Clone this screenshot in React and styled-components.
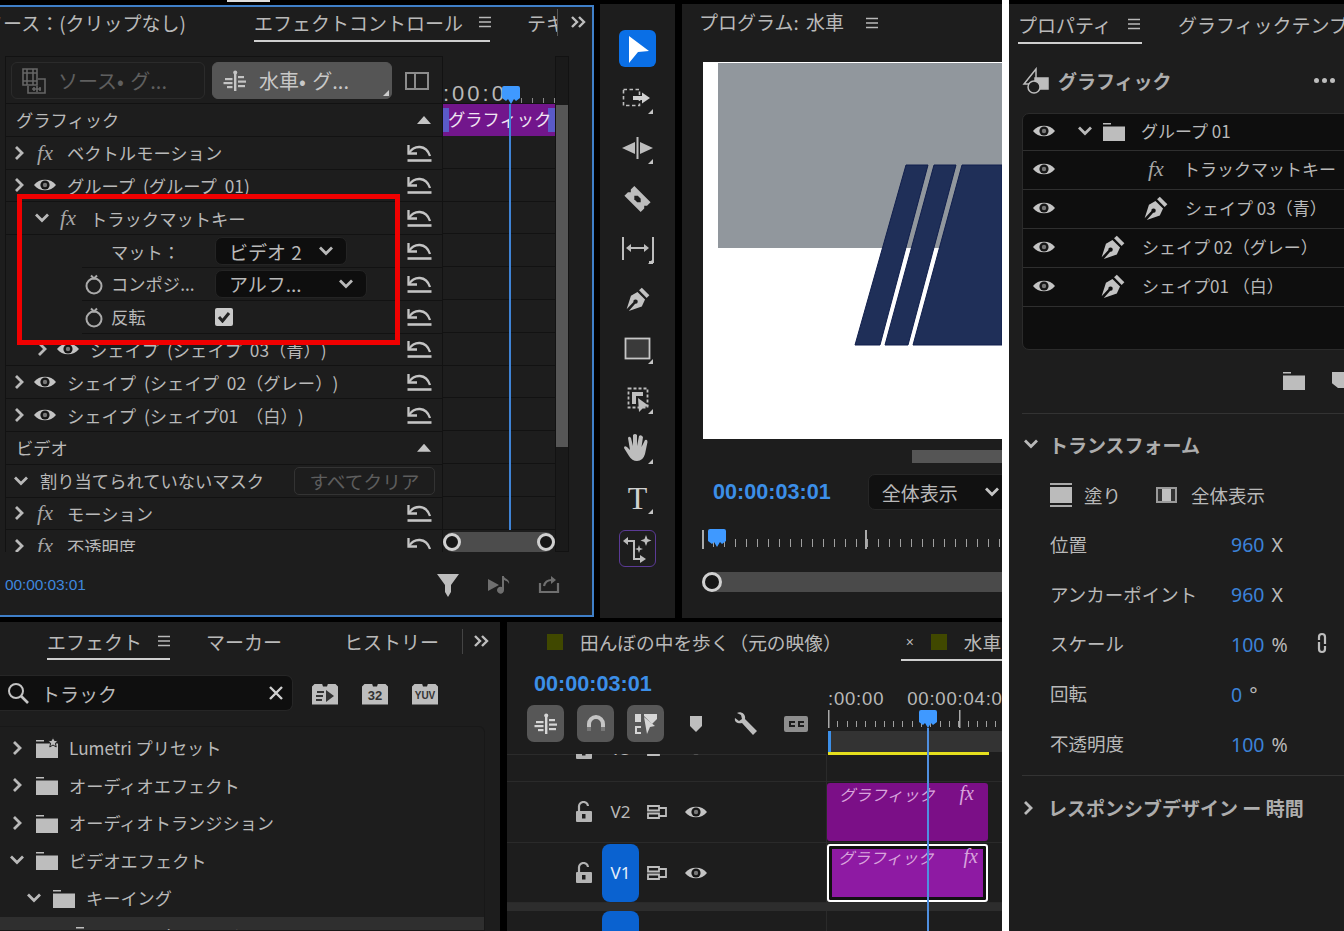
import React from 'react';
import styled, { createGlobalStyle } from 'styled-components';

const ink = '#b9b9b9';
const panel = '#1d1d1d';
const line = '#121212';
const blue = '#3c8fe8';
const jp = '"Noto Sans CJK JP", "Noto Sans", sans-serif';

const GlobalStyle = createGlobalStyle`
  html, body { margin: 0; padding: 0; background: #000; }
  body { font-family: ${jp}; color: ${ink}; text-spacing-trim: space-all; }
  * { box-sizing: border-box; }
`;

const Page = styled.div`
  width: 1344px;
  height: 931px;
  overflow: hidden;
  display: grid;
  grid-template-columns: 1002px 7px 335px;
  background: #000;
`;

const LeftArea = styled.div`
  display: flex;
  flex-direction: column;
  min-width: 0;
`;

const TopSliver = styled.div`
  height: 4px;
  flex: none;
  padding-left: 227px;
  &::before {
    content: '';
    display: block;
    width: 43px;
    height: 2px;
    background: #ddd;
  }
`;

const TopRow = styled.div`
  display: flex;
  height: 614px;
  flex: none;
`;

const BottomRow = styled.div`
  display: flex;
  margin-top: 4px;
  height: 309px;
  flex: none;
`;

const WhiteStrip = styled.div`
  background: #fff;
`;

/* ---------- icons ---------- */

const Glyph = styled.svg`
  display: block;
  flex: none;
`;

const ChevronR = () => (
  <Glyph width="12" height="16" viewBox="0 0 12 16" fill="none" stroke="#b9b9b9" strokeWidth="2.8">
    <path d="M3 2 L9 8 L3 14" />
  </Glyph>
);

const ChevronD = ({ color = '#b9b9b9' }) => (
  <Glyph width="16" height="12" viewBox="0 0 16 12" fill="none" stroke={color} strokeWidth="2.8">
    <path d="M2 2.5 L8 8.5 L14 2.5" />
  </Glyph>
);

const Eye = () => (
  <Glyph width="24" height="16" viewBox="0 0 24 16">
    <path d="M1 8 C6 1 18 1 23 8 C18 15 6 15 1 8Z" fill="#c4c4c4" />
    <circle cx="12" cy="8" r="4.6" fill="#161616" />
    <circle cx="12" cy="8" r="2.2" fill="#777" />
  </Glyph>
);

const Reset = () => (
  <Glyph width="26" height="20" viewBox="0 0 26 20" fill="none" stroke="#c4c4c4" strokeWidth="2.3">
    <path d="M2.5 2 V10.5 H11" />
    <path d="M3 10 C8 2 20 1 24 13" />
    <path d="M1.5 17.5 H25.5" strokeWidth="2.6" />
  </Glyph>
);

const Burger = () => (
  <Glyph width="14" height="12" viewBox="0 0 14 12" stroke="#b9b9b9" strokeWidth="1.4">
    <path d="M1 1.5 H13 M1 6 H13 M1 10.5 H13" />
  </Glyph>
);

const Overflow = () => (
  <Glyph width="16" height="14" viewBox="0 0 16 14" fill="none" stroke="#bdbdbd" strokeWidth="2.4">
    <path d="M2 2 L7 7 L2 12 M9 2 L14 7 L9 12" />
  </Glyph>
);

const Folder = ({ star }) => (
  <Glyph width="24" height="22" viewBox="0 0 24 22" fill="#bdbdbd">
    <path d="M1 3 H9 V4.5 H1Z M1 6.5 H23 V21 H1Z" />
    {star && <path d="M18 0 L19.5 3.4 L23 3.8 L20.4 6.2 L21.2 10 L18 8 L14.8 10 L15.6 6.2 L13 3.8 L16.5 3.4Z" stroke={panel} strokeWidth="1" />}
  </Glyph>
);

const Pen = ({ size = 26 }) => (
  <Glyph width={size} height={size} viewBox="0 0 24 24" fill="#c2c2c2">
    <path d="M15.5 1.5 L22.5 8.5 L20 11 L13 4Z" />
    <path fillRule="evenodd" d="M11.5 5.5 L18.5 12.5 L15.5 19 L3.5 23 L9.4 16.4 A2 2 0 1 0 7.8 14.8 L1.5 21.5 L5.5 9Z" />
  </Glyph>
);

const Stopwatch = () => (
  <Glyph width="20" height="22" viewBox="0 0 20 22" fill="none" stroke="#ababab" strokeWidth="2">
    <circle cx="10" cy="13" r="7.5" />
    <path d="M7 2.5 L10 5.5 L13 2.5" />
  </Glyph>
);

const Sequence = ({ color = '#c4c4c4' }) => (
  <Glyph width="24" height="24" viewBox="0 0 24 24" fill={color}>
    <rect x="11" y="2" width="2.4" height="20" />
    <circle cx="12.2" cy="3.5" r="2" />
    <rect x="2" y="9" width="7.5" height="2.2" />
    <rect x="0.5" y="13" width="9" height="2.2" />
    <rect x="4" y="17" width="5.5" height="2.2" />
    <rect x="15" y="7" width="6" height="2.2" />
    <rect x="15" y="11.5" width="8" height="2.2" />
    <rect x="15" y="16" width="7" height="2.2" />
  </Glyph>
);

const TrackTarget = () => (
  <Glyph width="20" height="16" viewBox="0 0 20 16" fill="none" stroke="#bdbdbd" strokeWidth="1.8">
    <path d="M1 2 H12 V6.5 H1Z M1 9.5 H12 V14 H1Z M12 4 H19 V12 H12" />
  </Glyph>
);

const Lock = () => (
  <Glyph width="18" height="22" viewBox="0 0 18 22">
    <path d="M4 10 V6 A4.5 4.5 0 0 1 13 5" fill="none" stroke="#b4b4b4" strokeWidth="2.2" />
    <rect x="1" y="10" width="16" height="11" rx="1" fill="#b4b4b4" />
    <rect x="7" y="13" width="3.5" height="4.5" fill="#1d1d1d" />
  </Glyph>
);

const PlayHead = () => (
  <Glyph width="18" height="19" viewBox="0 0 18 19" fill="#3f99ff">
    <path d="M2 0 H16 Q18 0 18 2 V12 L14 15 L12 13 L9 18 L6 13 L4 15 L0 12 V2 Q0 0 2 0Z" />
  </Glyph>
);

/* tool bar drawings */
const ToolSvg = ({ children }) => (
  <Glyph width="37" height="37" viewBox="0 0 37 37" fill="#bdbdbd">
    {children}
  </Glyph>
);

const tools = [
  <Glyph key="a" width="37" height="37" viewBox="0 0 37 37" fill="#fff"><polygon points="10,6 30,21 19,22 10,33" /></Glyph>,
  <ToolSvg key="b">
    <rect x="4.5" y="9.5" width="16" height="16" fill="none" stroke="#bdbdbd" strokeWidth="1.6" strokeDasharray="3.5 2.5" />
    <polygon points="14,16 23,16 23,12.5 31,18 23,23.5 23,20 14,20" fill="#d0d0d0" />
  </ToolSvg>,
  <ToolSvg key="c">
    <rect x="17.5" y="7" width="2" height="22" />
    <polygon points="16,12 16,24 3,18" />
    <polygon points="21,12 21,24 34,18" />
  </ToolSvg>,
  <ToolSvg key="d">
    <g transform="rotate(45 18.5 19)">
      <path d="M7 12 H30 V17 L28 19 L30 21 V26 H7 V21 L9 19 L7 17Z" />
      <path d="M14 19 L16.5 16.5 L20.5 16.5 L23 19 L20.5 21.5 L16.5 21.5Z" fill="#1d1d1d" />
    </g>
  </ToolSvg>,
  <ToolSvg key="e">
    <rect x="3" y="7" width="2" height="23" />
    <path d="M33 7 H35 V33 H30 V31 H33Z" />
    <path d="M7 18 L12 14 V17 H25 V14 L30 18 L25 22 V19 H12 V22Z" />
  </ToolSvg>,
  <ToolSvg key="f">
    <g transform="translate(6 6)"><Pen size={26} /></g>
  </ToolSvg>,
  <ToolSvg key="g">
    <rect x="6.5" y="8.5" width="24" height="20" fill="#3a3a3a" stroke="#c6c6c6" strokeWidth="1.8" />
  </ToolSvg>,
  <ToolSvg key="h">
    <rect x="9.5" y="8.5" width="19" height="19" fill="none" stroke="#bdbdbd" strokeWidth="1.8" strokeDasharray="3 2" />
    <path d="M13 12 H24 V16 H17 V24 H13Z" />
    <polygon points="19,18 30,26 25,27 20,32" />
  </ToolSvg>,
  <ToolSvg key="i">
    <path d="M10 26 L5 18 Q5 15 8 17 L11 20 L9 8 Q10 5.5 12 8 L14 16 L14 5 Q16 3 18 5 L18 16 L20 6 Q22 4 24 7 L22.5 17 L26 10 Q28.5 9 28.5 12 L26 24 Q24 31 18 31 Q13 31 10 26Z" />
  </ToolSvg>,
  null,
  <ToolSvg key="k">
    <path d="M4 11 L9 7 V10 H16 V28 H21 V25 L27 29 L21 33 V30 H14 V12 H9 V15Z" />
    <path d="M27 5 L28.5 9 L32.5 10.5 L28.5 12 L27 16 L25.5 12 L21.5 10.5 L25.5 9Z" />
    <path d="M20 15 L21 18 L24 19 L21 20 L20 23 L19 20 L16 19 L19 18Z" />
  </ToolSvg>,
];

/* ---------- shared tabs ---------- */

const TabBar = styled.div`
  display: flex;
  align-items: center;
  height: ${p => p.$h || 38}px;
  flex: none;
  font-size: 19px;
  white-space: nowrap;
  overflow: hidden;
`;

const Tab = styled.div`
  display: flex;
  align-items: center;
  gap: 15px;
  height: 100%;
  flex: none;
  margin-left: ${p => p.$ml || 0}px;
  padding-bottom: ${p => p.$pb || 0}px;
  ${p => p.$w ? `width: ${p.$w}px;` : ''}
  ${p => p.$active ? 'box-shadow: inset 0 -2px 0 #cfcfcf;' : ''}
`;

const CutTab = styled.div`
  width: ${p => p.$w}px;
  flex: none;
  overflow: hidden;
  display: flex;
  margin-left: ${p => p.$ml || 0}px;
  margin-bottom: ${p => p.$mb || 0}px;
  justify-content: ${p => p.$end ? 'flex-end' : 'flex-start'};
  ${p => p.$divider ? 'border-right: 1px solid #555;' : ''}
`;

const TabDivider = styled.div`
  width: 1px;
  height: 25px;
  flex: none;
  margin-left: 23px;
  background: #444;
`;

const OverflowSlot = styled.div`
  margin-left: ${p => p.$ml}px;
  margin-bottom: ${p => p.$mb || 0}px;
  flex: none;
`;

/* ---------- effect controls ---------- */

const EcPanel = styled.section`
  width: 594px;
  flex: none;
  margin: 1px 0;
  background: ${panel};
  border: 2px solid #3f7fc8;
  border-left: none;
  display: flex;
  flex-direction: column;
  position: relative;
`;

const EcBody = styled.div`
  margin: 14px 0 0 5px;
  height: 496px;
  width: 564px;
  display: grid;
  grid-template-columns: 438px 112px 14px;
  flex: none;
`;

const EcLeft = styled.div`
  display: flex;
  flex-direction: column;
  overflow: hidden;
  border-right: 1px solid ${line};
  box-shadow: inset 1px 1px 0 ${line};
`;

const SourceBar = styled.div`
  height: 48px;
  flex: none;
  display: flex;
  align-items: center;
  padding: 2px 0 0 6px;
  border-bottom: 1px solid ${line};
`;

const SourceTab = styled.div`
  height: 37px;
  width: ${p => p.$w}px;
  flex: none;
  margin-right: 7px;
  border-radius: 6px;
  display: flex;
  align-items: center;
  gap: 12px;
  padding-left: 10px;
  font-size: 20px;
  word-spacing: 2px;
  white-space: nowrap;
  position: relative;
  color: ${p => p.$active ? '#c8c8c8' : '#5f5f5f'};
  background: ${p => p.$active ? '#555' : 'transparent'};
  border: 1px solid ${p => p.$active ? '#555' : '#2b2b2b'};
`;

const CornerMark = styled.span`
  position: absolute;
  right: 2px;
  bottom: 2px;
  width: 6px;
  height: 6px;
  background: #ccc;
  clip-path: polygon(100% 0, 100% 100%, 0 100%);
`;

const SplitIcon = styled.div`
  width: 24px;
  height: 18px;
  margin-left: 6px;
  flex: none;
  border: 2px solid #8c8c8c;
  &::before {
    content: '';
    display: block;
    width: 7px;
    height: 100%;
    border-right: 2px solid #8c8c8c;
  }
`;

const Rows = styled.div`
  display: flex;
  flex-direction: column;
`;

const Row = styled.div`
  height: 32.8px;
  flex: none;
  display: flex;
  align-items: center;
  justify-content: space-between;
  padding: 0 10px 0 ${p => p.$indent || 8}px;
  margin-left: ${p => p.$inset || 0}px;
  border-bottom: 1px solid ${line};
  font-size: 17.3px;
  word-spacing: 4px;
  white-space: nowrap;
`;

const RowMain = styled.div`
  display: flex;
  align-items: center;
  min-width: 0;
`;

const ChevronSlot = styled.div`
  width: 12px;
  flex: none;
  margin-right: 8px;
  display: flex;
  justify-content: center;
`;

const IconSlot = styled.div`
  width: 24px;
  margin-right: 10px;
  flex: none;
  display: flex;
  justify-content: center;
`;

const Fx = styled.span`
  font-family: "Liberation Serif", serif;
  font-style: italic;
  font-size: ${p => p.$size || 22}px;
  line-height: 1;
  color: ${p => p.$color || '#a6a6a6'};
`;

const GroupTitle = styled.span`
  padding-left: 11px;
`;

const UpTriangle = styled.span`
  width: 14px;
  height: 8px;
  margin-right: 1px;
  background: #c4c4c4;
  clip-path: polygon(50% 0, 100% 100%, 0 100%);
`;

const ParamLabel = styled.span`
  width: 104px;
  flex: none;
`;

const Select = styled.div`
  width: ${p => p.$w}px;
  height: 28px;
  flex: none;
  background: #0e0e0e;
  border: 1px solid #242424;
  border-radius: 7px;
  display: flex;
  align-items: center;
  justify-content: space-between;
  padding: 0 12px 0 13px;
  font-size: 19px;
  word-spacing: 1px;
`;

const StopSlot = styled.div`
  width: 20px;
  flex: none;
  margin-right: 7px;
`;

const Check = styled.div`
  width: 18px;
  height: 18px;
  flex: none;
  border-radius: 2px;
  background: #c9c9c9;
  display: flex;
  align-items: center;
  justify-content: center;
`;

const ClearBtn = styled.div`
  width: 141px;
  height: 28px;
  flex: none;
  margin-right: -3px;
  border: 1px solid #333;
  border-radius: 5px;
  display: flex;
  align-items: center;
  justify-content: center;
  font-size: 18.7px;
  color: #5e5e5e;
`;

const Lanes = styled.div`
  position: relative;
  overflow: hidden;
  display: flex;
  flex-direction: column;
`;

const LaneHead = styled.div`
  height: 48px;
  flex: none;
  display: flex;
  flex-direction: column;
  justify-content: flex-end;
  overflow: hidden;
  border-bottom: 1px solid ${line};
  background: repeating-linear-gradient(90deg, #8a8a8a 0 1px, transparent 1px 11px) 78px 100% / 100% 5px no-repeat;
`;

const LaneTime = styled.div`
  font-family: "Liberation Sans", sans-serif;
  font-size: 22px;
  line-height: 24px;
  letter-spacing: 3px;
  margin-bottom: -3px;
  white-space: nowrap;
`;

const LaneClip = styled.div`
  height: 32px;
  flex: none;
  background:
    linear-gradient(90deg, #5a5ac8 0 6px, transparent 6px calc(100% - 7px), #5a5ac8 calc(100% - 7px)) 0 4px / 100% 24px no-repeat,
    #72168c;
  padding-left: 5px;
  color: #f0e6f2;
  font-size: 17.3px;
  line-height: 30px;
  white-space: nowrap;
`;

const LaneRow = styled.div`
  height: 32.8px;
  flex: none;
  border-bottom: 1px solid ${line};
`;

const Zoomer = styled.div`
  position: absolute;
  left: 0;
  right: 0;
  bottom: 0;
  height: 20px;
  background: #4c4c4c;
  border-radius: 10px;
  display: flex;
  justify-content: space-between;
  align-items: center;
`;

const Knob = styled.span`
  width: ${p => p.$size || 18}px;
  height: ${p => p.$size || 18}px;
  flex: none;
  border-radius: 50%;
  background: #161616;
  border: 3px solid #d0d0d0;
`;

const EcLine = styled.div`
  position: absolute;
  left: 66px;
  top: 48px;
  bottom: 22px;
  width: 1.5px;
  background: #3f83d6;
`;

const EcHead = styled.div`
  position: absolute;
  left: 59px;
  top: 30px;
`;

const VScroll = styled.div`
  background: #1a1a1a;
  border: 1px solid ${line};
  padding-top: 48px;
  height: 100%;
  &::before {
    content: '';
    display: block;
    height: 342px;
    background: #565656;
  }
`;

const EcFoot = styled.div`
  flex: 1;
  display: flex;
  align-items: center;
  padding: 2px 32px 0 5px;
`;

const TimeSmall = styled.div`
  font-family: "Liberation Sans", sans-serif;
  font-size: 15.5px;
  color: #3f86dc;
  margin-right: auto;
  letter-spacing: -0.1px;
`;

const FootIcons = styled.div`
  display: flex;
  align-items: center;
  gap: 27px;
`;

const RedBox = styled.div`
  position: absolute;
  left: 17px;
  top: 187px;
  width: 383px;
  height: 151px;
  border: 5px solid #f00000;
  pointer-events: none;
`;

const EffectControls = () => {
  const reset = <Reset />;
  const chevR = <ChevronSlot><ChevronR /></ChevronSlot>;
  const fx = <IconSlot><Fx>fx</Fx></IconSlot>;
  const eye = <IconSlot><Eye /></IconSlot>;
  return (
    <EcPanel>
      <TabBar $h={35}>
        <CutTab $w={186} $end $mb={5}><span>ソース：(クリップなし)</span></CutTab>
        <Tab $ml={68} $pb={5} $active $w={236}>エフェクトコントロール<Burger /></Tab>
        <CutTab $w={31} $ml={37} $mb={5} $divider><span>テキスト</span></CutTab>
        <OverflowSlot $ml={12} $mb={5}><Overflow /></OverflowSlot>
      </TabBar>
      <EcBody>
        <EcLeft>
          <SourceBar>
            <SourceTab $w={194}>
              <Glyph width="24" height="26" viewBox="0 0 24 26" fill="none" stroke="#666" strokeWidth="1.6">
                <path d="M1 1 H15 V17 H1Z M1 5 H15 M1 13 H15 M5 1 V17 M11 1 V17" />
                <path d="M6 18 V25 H23 V11 H16 M10 21 H19 M12 19 V23 M15 18 V24 M18 19 V23" />
              </Glyph>
              ソース• グ...
            </SourceTab>
            <SourceTab $w={180} $active>
              <Sequence />
              水車• グ...
              <CornerMark />
            </SourceTab>
            <SplitIcon />
          </SourceBar>
          <Rows>
            <Row $indent={11}><span>グラフィック</span><UpTriangle /></Row>
            <Row><RowMain>{chevR}{fx}ベクトルモーション</RowMain>{reset}</Row>
            <Row><RowMain>{chevR}{eye}グループ (グループ 01)</RowMain>{reset}</Row>
            <Row $indent={31}><RowMain><ChevronSlot><ChevronD /></ChevronSlot><IconSlot><Fx>fx</Fx></IconSlot>トラックマットキー</RowMain>{reset}</Row>
            <Row $indent={2} $inset={77}><RowMain><StopSlot /><ParamLabel>マット：</ParamLabel><Select $w={132}>ビデオ 2<ChevronD /></Select></RowMain>{reset}</Row>
            <Row $indent={2} $inset={77}><RowMain><StopSlot><Stopwatch /></StopSlot><ParamLabel>コンポジ...</ParamLabel><Select $w={152}>アルフ...<ChevronD /></Select></RowMain>{reset}</Row>
            <Row $indent={2} $inset={77}><RowMain><StopSlot><Stopwatch /></StopSlot><ParamLabel>反転</ParamLabel><Check><Glyph width="14" height="12" viewBox="0 0 14 12" fill="none" stroke="#222" strokeWidth="3"><path d="M2 6 L5.5 10 L12 2" /></Glyph></Check></RowMain>{reset}</Row>
            <Row $indent={31}><RowMain>{chevR}{eye}シェイプ (シェイプ 03（青）)</RowMain>{reset}</Row>
            <Row><RowMain>{chevR}{eye}シェイプ (シェイプ 02（グレー）)</RowMain>{reset}</Row>
            <Row><RowMain>{chevR}{eye}シェイプ (シェイプ01 （白）)</RowMain>{reset}</Row>
            <Row $indent={11}><span>ビデオ</span><UpTriangle /></Row>
            <Row><RowMain><ChevronD /><GroupTitle>割り当てられていないマスク</GroupTitle></RowMain><ClearBtn>すべてクリア</ClearBtn></Row>
            <Row><RowMain>{chevR}{fx}モーション</RowMain>{reset}</Row>
            <Row><RowMain>{chevR}{fx}不透明度</RowMain>{reset}</Row>
          </Rows>
        </EcLeft>
        <Lanes>
          <LaneHead>
            <LaneTime>:00:0</LaneTime>
          </LaneHead>
          <LaneClip>グラフィック</LaneClip>
          {Array.from({ length: 12 }, (_, i) => <LaneRow key={i} />)}
          <EcLine />
          <EcHead><PlayHead /></EcHead>
          <Zoomer><Knob /><Knob /></Zoomer>
        </Lanes>
        <VScroll />
      </EcBody>
      <EcFoot>
        <TimeSmall>00:00:03:01</TimeSmall>
        <FootIcons>
          <Glyph width="24" height="24" viewBox="0 0 24 24" fill="#bdbdbd"><path d="M1 1 H23 L15 12 V19 L12 24 L9 19 V12Z" /></Glyph>
          <Glyph width="24" height="20" viewBox="0 0 24 20" fill="#6f6f6f"><path d="M1 4 L12 10 L1 16Z M15 1 H17 V2 C19 4 23 5 22 9 C21 6 19 6 17 5 V15 A3.5 3.5 0 1 1 15 12Z" /></Glyph>
          <Glyph width="22" height="20" viewBox="0 0 22 20" fill="none" stroke="#6f6f6f" strokeWidth="2.2"><path d="M2 8 V17 H20 V8 M6 11 C7 6 10 5 14 5" /><path d="M13 1 L18 5 L13 9Z" fill="#6f6f6f" stroke="none" /></Glyph>
        </FootIcons>
      </EcFoot>
      <RedBox />
    </EcPanel>
  );
};

/* ---------- tool bar ---------- */

const ToolBarWrap = styled.nav`
  width: 75px;
  margin-left: 6px;
  flex: none;
  background: ${panel};
  display: flex;
  flex-direction: column;
  align-items: center;
  gap: 13px;
  padding: 26px 0 0;
`;

const ToolBtn = styled.div`
  width: 37px;
  height: 37px;
  flex: none;
  position: relative;
  border-radius: 6px;
  display: flex;
  align-items: center;
  justify-content: center;
  background: ${p => p.$active ? '#0a6fe6' : 'transparent'};
  border: ${p => p.$ai ? '1.5px solid #5b3a96' : 'none'};
  ${p => p.$corner ? `
    &::after {
      content: '';
      position: absolute;
      right: 3px;
      bottom: 3px;
      width: 5px;
      height: 5px;
      background: #c4c4c4;
      clip-path: polygon(100% 0, 100% 100%, 0 100%);
    }` : ''}
`;

const TypeT = styled.span`
  font-family: "Liberation Serif", serif;
  font-size: 32px;
  line-height: 37px;
  color: #cfcfcf;
`;

const ToolBar = () => (
  <ToolBarWrap>
    {tools.map((t, i) => (
      <ToolBtn key={i} $active={i === 0} $ai={i === 10} $corner={i > 0 && i < 10 && i !== 3 && i !== 5}>
        {t || <TypeT>T</TypeT>}
      </ToolBtn>
    ))}
  </ToolBarWrap>
);

/* ---------- program monitor ---------- */

const Program = styled.section`
  width: 320px;
  margin-left: 7px;
  flex: none;
  background: ${panel};
  display: flex;
  flex-direction: column;
  overflow: hidden;
`;

const ProgramTitle = styled.div`
  height: 58px;
  flex: none;
  display: flex;
  gap: 21px;
  padding: 3px 0 0 17px;
  font-size: 19px;
  word-spacing: 3px;
  line-height: 29px;
  white-space: nowrap;
`;

const BurgerAt = styled.div`
  padding-top: 10px;
`;

const Frame = styled.svg`
  display: block;
  flex: none;
  margin-left: 21px;
`;

const MiniScroll = styled.div`
  height: 13px;
  flex: none;
  margin: 11px 0 0 230px;
  background: #555;
`;

const TimeRow = styled.div`
  display: flex;
  align-items: center;
  margin-top: 11px;
  padding-left: 31px;
  height: 36px;
  flex: none;
`;

const TimeBig = styled.div`
  font-family: "Liberation Sans", sans-serif;
  font-weight: 700;
  font-size: 21.6px;
  color: ${blue};
  white-space: nowrap;
`;

const ScaleSelect = styled.div`
  width: 140px;
  height: 36px;
  flex: none;
  margin-left: 37px;
  background: #111;
  border: 1px solid #262626;
  border-radius: 7px;
  display: flex;
  align-items: center;
  justify-content: space-between;
  padding: 0 7px 0 13px;
  font-size: 19px;
`;

const MonRuler = styled.div`
  position: relative;
  height: 19px;
  flex: none;
  margin: 20px 0 0 20px;
  background:
    linear-gradient(#aaa, #aaa) 0 0 / 2px 100% no-repeat,
    linear-gradient(#aaa, #aaa) 163px 0 / 2px 100% no-repeat,
    repeating-linear-gradient(90deg, #a0a0a0 0 1px, transparent 1px 11px) 0 9px / 100% 8px no-repeat;
`;

const MonHead = styled.div`
  position: absolute;
  left: 6px;
  top: -1px;
`;

const MonSlider = styled.div`
  height: 20px;
  flex: none;
  margin: 23px 0 0 20px;
  background: #4a4a4a;
  border-radius: 10px 0 0 10px;
  display: flex;
  align-items: center;
`;

const ProgramMonitor = () => (
  <Program>
    <ProgramTitle>プログラム: 水車<BurgerAt><Burger /></BurgerAt></ProgramTitle>
    <Frame width="299" height="377" viewBox="0 0 299 377">
      <rect width="299" height="377" fill="#fff" />
      <rect x="15" y="1" width="284" height="185" fill="#91979d" />
      <g fill="#1f2f58" stroke="#111f4c" strokeWidth="1">
        <polygon points="203,103 225,103 177,283 152,283" />
        <polygon points="231,103 253,103 205,283 182,283" />
        <polygon points="259,103 299,103 299,283 210,283" />
      </g>
    </Frame>
    <MiniScroll />
    <TimeRow>
      <TimeBig>00:00:03:01</TimeBig>
      <ScaleSelect>全体表示<ChevronD color="#c4c4c4" /></ScaleSelect>
    </TimeRow>
    <MonRuler><MonHead><PlayHead /></MonHead></MonRuler>
    <MonSlider><Knob $size={20} /></MonSlider>
  </Program>
);

/* ---------- effects panel ---------- */

const EffectsWrap = styled.section`
  width: 500px;
  flex: none;
  background: ${panel};
  display: flex;
  flex-direction: column;
  overflow: hidden;
`;

const SearchRow = styled.div`
  display: flex;
  align-items: center;
  height: 36px;
  margin-top: 15px;
  flex: none;
`;

const SearchBox = styled.div`
  width: 293px;
  height: 36px;
  flex: none;
  background: #0f0f0f;
  border: 1px solid #262626;
  border-left: none;
  border-radius: 0 7px 7px 0;
  display: flex;
  align-items: center;
  padding: 0 9px 0 6px;
  gap: 11px;
  font-size: 19px;
`;

const SearchText = styled.span`
  flex: 1;
`;

const Badges = styled.div`
  display: flex;
  gap: 24px;
  margin: 2px 0 0 19px;
`;

const Badge = styled.div`
  width: 26px;
  height: 21px;
  flex: none;
  background: #bdbdbd;
  color: #333;
  font-family: "Liberation Sans", sans-serif;
  font-weight: 700;
  font-size: ${p => p.$small ? 10 : 13}px;
  display: flex;
  align-items: center;
  justify-content: center;
  padding-top: 3px;
  clip-path: polygon(0 3px, 3px 0, 10px 0, 11px 3px, 15px 3px, 16px 0, 23px 0, 26px 3px, 26px 100%, 0 100%);
`;

const TreeBox = styled.div`
  width: 485px;
  margin-top: 15px;
  flex: 1;
  border: 1px solid #181818;
  border-left: none;
  border-radius: 0 6px 0 0;
  padding-top: 2px;
  overflow: hidden;
`;

const TreeRow = styled.div`
  height: 37.5px;
  display: flex;
  align-items: center;
  padding-left: ${p => p.$indent || 10}px;
  font-size: 17.2px;
  white-space: nowrap;
  background: ${p => p.$selected ? '#2f2f2f' : 'transparent'};
`;

const TreeChevron = styled.div`
  width: 14px;
  flex: none;
  margin-right: 11px;
  display: flex;
  justify-content: center;
`;

const TreeLabel = styled.span`
  padding-left: 10px;
`;

const Effects = () => (
  <EffectsWrap>
    <TabBar $h={38}>
      <Tab $ml={47} $active $w={123}>エフェクト<Burger /></Tab>
      <Tab $ml={36}>マーカー</Tab>
      <Tab $ml={62}>ヒストリー</Tab>
      <TabDivider />
      <OverflowSlot $ml={10}><Overflow /></OverflowSlot>
    </TabBar>
    <SearchRow>
      <SearchBox>
        <Glyph width="24" height="24" viewBox="0 0 24 24" fill="none" stroke="#c4c4c4" strokeWidth="2">
          <circle cx="10" cy="10" r="7" />
          <path d="M15 15 L22 22" strokeWidth="2.6" />
        </Glyph>
        <SearchText>トラック</SearchText>
        <Glyph width="14" height="14" viewBox="0 0 14 14" stroke="#d0d0d0" strokeWidth="2.4">
          <path d="M1 1 L13 13 M13 1 L1 13" />
        </Glyph>
      </SearchBox>
      <Badges>
        <Badge>
          <Glyph width="18" height="14" viewBox="0 0 18 14" fill="#333"><path d="M1 2 H8 V4 H1Z M0 6 H7 V8 H0Z M0 10 H6 V12 H0Z M10 1 L18 7 L10 13Z" /></Glyph>
        </Badge>
        <Badge>32</Badge>
        <Badge $small>YUV</Badge>
      </Badges>
    </SearchRow>
    <TreeBox>
      <TreeRow><TreeChevron><ChevronR /></TreeChevron><Folder star /><TreeLabel>Lumetri プリセット</TreeLabel></TreeRow>
      <TreeRow><TreeChevron><ChevronR /></TreeChevron><Folder /><TreeLabel>オーディオエフェクト</TreeLabel></TreeRow>
      <TreeRow><TreeChevron><ChevronR /></TreeChevron><Folder /><TreeLabel>オーディオトランジション</TreeLabel></TreeRow>
      <TreeRow><TreeChevron><ChevronD /></TreeChevron><Folder /><TreeLabel>ビデオエフェクト</TreeLabel></TreeRow>
      <TreeRow $indent={27}><TreeChevron><ChevronD /></TreeChevron><Folder /><TreeLabel>キーイング</TreeLabel></TreeRow>
      <TreeRow $indent={75} $selected><Folder /><TreeLabel>トラックマットキー</TreeLabel></TreeRow>
    </TreeBox>
  </EffectsWrap>
);

/* ---------- timeline ---------- */

const TimelineWrap = styled.section`
  width: 495px;
  flex: none;
  margin-left: 7px;
  background: ${panel};
  display: flex;
  flex-direction: column;
  position: relative;
  overflow: hidden;
`;

const Swatch = styled.span`
  width: 16px;
  height: 16px;
  flex: none;
  background: #404800;
`;

const SeqTab = styled.div`
  display: flex;
  align-items: center;
  gap: 17px;
  height: 100%;
  flex: none;
  font-size: 18.7px;
  margin-left: ${p => p.$ml}px;
  ${p => p.$active ? 'padding: 0 4px 0 5px; box-shadow: inset 0 -2px 0 #cfcfcf;' : ''}
`;

const TabClose = styled.span`
  font-family: "Liberation Sans", sans-serif;
  font-size: 14px;
`;

const SeqHead = styled.div`
  display: grid;
  grid-template-columns: 320px 1fr;
  height: 93px;
  flex: none;
`;

const SeqTools = styled.div`
  padding: 10px 0 0 20px;
  display: flex;
  flex-direction: column;
  border-bottom: 1px solid #2b2b2b;
`;

const SeqTime = styled(TimeBig)`
  padding-left: 7px;
  line-height: 26px;
`;

const ToolRow = styled.div`
  display: flex;
  align-items: center;
  margin-top: 8px;
`;

const SeqBtn = styled.div`
  width: 37px;
  height: 37px;
  flex: none;
  margin-right: 13px;
  background: #575757;
  border-radius: 7px;
  display: flex;
  align-items: center;
  justify-content: center;
`;

const PlainIcon = styled.div`
  width: 37px;
  flex: none;
  margin-right: 13px;
  display: flex;
  justify-content: center;
`;

const SeqRuler = styled.div`
  display: flex;
  flex-direction: column;
  padding-top: 26px;
  position: relative;
`;

const RulerLabels = styled.div`
  display: flex;
  height: 23px;
  font-family: "Liberation Sans", sans-serif;
  font-size: 18.5px;
  line-height: 23px;
  letter-spacing: 0.8px;
  white-space: nowrap;
  color: #b9b9b9;
  padding-left: 1px;
`;

const RulerGap = styled.span`
  width: 23px;
  flex: none;
`;

const SeqTicks = styled.div`
  height: 18px;
  flex: none;
  margin-left: 1px;
  background:
    linear-gradient(#aaa, #aaa) 0 0 / 1.5px 100% no-repeat,
    linear-gradient(#aaa, #aaa) 131px 0 / 1.5px 100% no-repeat,
    repeating-linear-gradient(90deg, #a0a0a0 0 1px, transparent 1px 9.3px) 0 11px / 100% 6px no-repeat;
`;

const WorkBand = styled.div`
  height: 21px;
  flex: none;
  margin: 3px 0 0 1px;
  background: #333;
  border-left: 3px solid ${blue};
`;

const YellowBar = styled.div`
  height: 3px;
  flex: none;
  width: 161px;
  margin-left: 1px;
  background: #e6e01e;
`;

const Track = styled.div`
  display: grid;
  grid-template-columns: 320px 1fr;
  height: ${p => p.$h}px;
  flex: none;
  overflow: hidden;
  border-bottom: ${p => p.$plain ? 'none' : '1px solid #2a2a2a'};
`;

const TrackHead = styled.div`
  display: flex;
  align-items: ${p => p.$top ? 'flex-start' : 'center'};
  padding-left: 68px;
  border-right: 1px solid #2a2a2a;
`;

const HeadIcons = styled.div`
  display: flex;
  align-items: center;
  height: 30px;
  margin-top: -20px;
`;

const LockGap = styled.div`
  width: 18px;
  flex: none;
`;

const TrackLabel = styled.div`
  width: 37px;
  flex: none;
  margin-left: 9px;
  text-align: center;
  font-family: "Noto Sans", sans-serif;
  font-size: 17px;
  line-height: 58px;
  height: 58px;
  border-radius: 8px;
  background: ${p => p.$on ? '#0a62d0' : 'transparent'};
  color: ${p => p.$on ? '#e6eefa' : ink};
`;

const TargetSlot = styled.div`
  margin-left: 8px;
`;

const EyeSlot = styled.div`
  margin-left: 17px;
`;

const Clip = styled.div`
  width: 161px;
  height: 58px;
  margin: 1px 0 0 0;
  display: flex;
  justify-content: space-between;
  align-items: flex-start;
  padding: ${p => p.$selected ? '0 8px 0 9px' : '0 14px 0 12px'};
  font-size: 16px;
  line-height: 22px;
  font-style: italic;
  color: #d8a4dc;
  white-space: nowrap;
  border-radius: 3px;
  background: ${p => p.$selected ? '#8e1aa3' : '#7b0f87'};
  ${p => p.$selected ? 'border: 2.5px solid #fff; box-shadow: inset 0 0 0 3px #111;' : ''}
`;

const Band = styled.div`
  height: 8px;
  flex: none;
  background: #2d2d2d;
`;

const PlayLine = styled.div`
  position: absolute;
  left: 420px;
  top: 106px;
  bottom: 0;
  width: 1.5px;
  background: #4f8fe0;
`;

const SeqPlayHead = styled.div`
  position: absolute;
  left: 412px;
  top: 88px;
`;

const TrackRow = ({ label, on, h, selected }) => (
  <Track $h={h}>
    <TrackHead>
      <Lock />
      <TrackLabel $on={on}>{label}</TrackLabel>
      <TargetSlot><TrackTarget /></TargetSlot>
      <EyeSlot><Eye /></EyeSlot>
    </TrackHead>
    <Clip $selected={selected}>
      <span>グラフィック</span>
      <Fx $size={20} $color="#d8a4dc">fx</Fx>
    </Clip>
  </Track>
);

const Timeline = () => (
  <TimelineWrap>
    <TabBar $h={39}>
      <SeqTab $ml={40}><Swatch />田んぼの中を歩く（元の映像）</SeqTab>
      <SeqTab $ml={59} $active><TabClose>×</TabClose><Swatch />水車</SeqTab>
    </TabBar>
    <SeqHead>
      <SeqTools>
        <SeqTime>00:00:03:01</SeqTime>
        <ToolRow>
          <SeqBtn><Sequence color="#d6d6d6" /></SeqBtn>
          <SeqBtn>
            <Glyph width="20" height="20" viewBox="0 0 20 20" fill="none">
              <path d="M3 17 V10 A7 7 0 0 1 17 10 V17" stroke="#c4c4c4" strokeWidth="4" />
              <path d="M1 15 H5 M15 15 H19" stroke="#777" strokeWidth="4" />
            </Glyph>
          </SeqBtn>
          <SeqBtn>
            <Glyph width="26" height="26" viewBox="0 0 26 26" fill="#d6d6d6">
              <path d="M2 3 H8 V11 H2Z M2 15 H8 V17 H4 V21 H8 V23 H2Z" />
              <path d="M11 3 H24 V8 L19 13 L11 5Z" />
              <path d="M11 6 L22 15 L17 16 L14 23Z" />
            </Glyph>
          </SeqBtn>
          <PlainIcon>
            <Glyph width="14" height="18" viewBox="0 0 14 18" fill="#bdbdbd"><path d="M1 1 H13 V11 L7 17 L1 11Z" /></Glyph>
          </PlainIcon>
          <PlainIcon>
            <Glyph width="24" height="24" viewBox="0 0 24 24" fill="#bdbdbd">
              <path d="M1 6 L5 9 L8 7 L7 3 L3 1 C7 -1 12 2 11 7 L23 19 L19 23 L8 11 C4 12 0 10 1 6Z" />
            </Glyph>
          </PlainIcon>
          <PlainIcon>
            <Glyph width="26" height="18" viewBox="0 0 26 18" fill="#8e8e8e">
              <path fillRule="evenodd" d="M3 1 H23 Q25 1 25 3 V15 Q25 17 23 17 H3 Q1 17 1 15 V3 Q1 1 3 1Z M12 6 H6 V12 H12 V10 H8 V8 H12Z M21 6 H15 V12 H21 V10 H17 V8 H21Z" />
            </Glyph>
          </PlainIcon>
        </ToolRow>
      </SeqTools>
      <SeqRuler>
        <RulerLabels>:00:00<RulerGap />00:00:04:00</RulerLabels>
        <SeqTicks />
        <WorkBand />
        <YellowBar />
      </SeqRuler>
    </SeqHead>
    <Track $h={28}>
      <TrackHead $top>
        <HeadIcons>
          <Lock />
          <TrackLabel>V3</TrackLabel>
          <TargetSlot><TrackTarget /></TargetSlot>
          <EyeSlot><Eye /></EyeSlot>
        </HeadIcons>
      </TrackHead>
    </Track>
    <TrackRow label="V2" h={61} />
    <TrackRow label="V1" on h={60} selected />
    <Band />
    <Track $h={30} $plain>
      <TrackHead $top>
        <LockGap />
        <TrackLabel $on />
      </TrackHead>
    </Track>
    <PlayLine />
    <SeqPlayHead><PlayHead /></SeqPlayHead>
  </TimelineWrap>
);

/* ---------- properties ---------- */

const Props = styled.aside`
  margin-top: 4px;
  background: ${panel};
  overflow: hidden;
  display: flex;
  flex-direction: column;
`;

const PropTabs = styled(TabBar)`
  height: 40px;
  padding-left: 9px;
`;

const SectionHead = styled.div`
  display: flex;
  align-items: center;
  height: 30px;
  margin-top: 21px;
  padding: 0 9px 0 13px;
  flex: none;
  font-size: 19px;
  font-weight: 700;
  color: #adadad;
`;

const SectionName = styled.span`
  margin-left: 9px;
  flex: 1;
`;

const Dots = styled.div`
  display: flex;
  gap: 3px;
  &::before, &::after, & > span {
    content: '';
    width: 5px;
    height: 5px;
    border-radius: 50%;
    background: #bdbdbd;
  }
`;

const LayerBox = styled.div`
  margin: 18px -10px 0 13px;
  height: 237px;
  flex: none;
  background: #0e0e0e;
  border: 1px solid #2b2b2b;
  border-radius: 7px;
`;

const LayerRow = styled.div`
  height: 39px;
  display: flex;
  align-items: center;
  padding: 0 0 3px 9px;
  font-size: 17px;
  white-space: nowrap;
  border-bottom: 1px solid #2f2f2f;
  &:first-child { height: 37px; }
`;

const LayerBody = styled.div`
  display: flex;
  align-items: center;
  gap: ${p => p.$gap || 16}px;
  margin-left: ${p => p.$ml}px;
`;

const LayerActions = styled.div`
  display: flex;
  justify-content: flex-end;
  align-items: center;
  gap: 26px;
  height: 30px;
  flex: none;
  margin: 15px -12px 0 0;
`;

const NewItem = styled.div`
  width: 24px;
  height: 16px;
  background: #bdbdbd;
  clip-path: polygon(0 0, 60% 0, 60% 20%, 100% 20%, 100% 100%, 25% 100%, 0 70%);
`;

const Rule = styled.div`
  height: 1px;
  flex: none;
  margin: ${p => p.$m || '0'};
  background: #333;
`;

const TransformHead = styled.div`
  display: flex;
  align-items: center;
  gap: 10px;
  padding-left: 14px;
  height: 30px;
  flex: none;
  margin-top: 15px;
  font-size: 19px;
  font-weight: 700;
  color: #adadad;
`;

const FillRow = styled.div`
  display: flex;
  align-items: center;
  height: 30px;
  flex: none;
  margin: 21px 0 9px;
  padding-left: 41px;
  font-size: 18.5px;
`;

const FillIcon = styled.div`
  width: ${p => p.$tall ? 22 : 21}px;
  height: ${p => p.$tall ? 24 : 16}px;
  flex: none;
  margin-right: ${p => p.$tall ? 12 : 14}px;
  margin-left: ${p => p.$ml || 0}px;
  border: ${p => p.$tall ? 'none' : '2px solid #9a9a9a'};
  background: ${p => p.$tall
    ? 'linear-gradient(#aaa 0 2px, transparent 2px 4px, #bbb 4px 20px, transparent 20px 22px, #aaa 22px 24px)'
    : 'linear-gradient(90deg, #333 0 4px, #c0c0c0 4px 13px, #333 13px)'};
`;

const PropRow = styled.div`
  display: grid;
  grid-template-columns: 181px auto 1fr;
  align-items: center;
  height: 49.8px;
  flex: none;
  padding-left: 41px;
  font-size: 18.5px;
`;

const PropValue = styled.span`
  font-size: 19.5px;
`;

const Value = styled.span`
  color: #3b82d8;
  font-family: "Noto Sans", sans-serif;
`;

const Unit = styled.span`
  color: #b9b9b9;
  font-family: "Noto Sans", sans-serif;
  margin-left: 7px;
`;

const LinkIcon = styled.span`
  margin-left: 28px;
`;

const ResponsiveRow = styled.div`
  display: flex;
  align-items: center;
  gap: 14px;
  padding-left: 13px;
  height: 30px;
  flex: none;
  margin-top: 17px;
  font-size: 19px;
  font-weight: 700;
  color: #adadad;
`;

const PropCell = ({ name, value, unit, link }) => (
  <PropRow>
    <span>{name}</span>
    <PropValue><Value>{value}</Value><Unit>{unit}</Unit></PropValue>
    {link ? (
      <LinkIcon>
        <Glyph width="12" height="22" viewBox="0 0 12 22" fill="none" stroke="#bdbdbd" strokeWidth="2.2">
          <path d="M3 8 V5 A3 3 0 0 1 9 5 V12 M9 14 V17 A3 3 0 0 1 3 17 V10" />
        </Glyph>
      </LinkIcon>
    ) : <span />}
  </PropRow>
);

const Properties = () => (
  <Props>
    <PropTabs>
      <Tab $active $w={124}>プロパティ<Burger /></Tab>
      <Tab $ml={36}>グラフィックテンプレート</Tab>
    </PropTabs>
    <SectionHead>
      <Glyph width="27" height="27" viewBox="0 0 27 27" fill="none" stroke="#bdbdbd" strokeWidth="1.5">
        <path d="M14 2 L2 17 H14Z" />
        <rect x="13" y="11" width="13" height="11" fill="#bdbdbd" />
        <circle cx="12" cy="20" r="6" fill={panel} />
      </Glyph>
      <SectionName>グラフィック</SectionName>
      <Dots><span /></Dots>
    </SectionHead>
    <LayerBox>
      <LayerRow><Eye /><LayerBody $ml={21} $gap={9}><ChevronD /><Folder /></LayerBody><LayerBody $ml={15}>グループ 01</LayerBody></LayerRow>
      <LayerRow><Eye /><LayerBody $ml={92} $gap={19}><Fx>fx</Fx>トラックマットキー</LayerBody></LayerRow>
      <LayerRow><Eye /><LayerBody $ml={87}><Pen />シェイプ 03（青）</LayerBody></LayerRow>
      <LayerRow><Eye /><LayerBody $ml={44}><Pen />シェイプ 02（グレー）</LayerBody></LayerRow>
      <LayerRow><Eye /><LayerBody $ml={44}><Pen />シェイプ01 （白）</LayerBody></LayerRow>
    </LayerBox>
    <LayerActions>
      <Folder />
      <NewItem />
    </LayerActions>
    <Rule $m="18px 0 0 13px" />
    <TransformHead><ChevronD />トランスフォーム</TransformHead>
    <FillRow>
      <FillIcon $tall />塗り
      <FillIcon $ml={35} />全体表示
    </FillRow>
    <PropCell name="位置" value="960" unit="X" />
    <PropCell name="アンカーポイント" value="960" unit="X" />
    <PropCell name="スケール" value="100" unit="%" link />
    <PropCell name="回転" value="0" unit="°" />
    <PropCell name="不透明度" value="100" unit="%" />
    <Rule $m="7px 0 0 13px" />
    <ResponsiveRow><ChevronR />レスポンシブデザイン ー 時間</ResponsiveRow>
  </Props>
);

const App = () => (
  <>
    <GlobalStyle />
    <Page>
      <LeftArea>
        <TopSliver />
        <TopRow>
          <EffectControls />
          <ToolBar />
          <ProgramMonitor />
        </TopRow>
        <BottomRow>
          <Effects />
          <Timeline />
        </BottomRow>
      </LeftArea>
      <WhiteStrip />
      <Properties />
    </Page>
  </>
);

export default App;
